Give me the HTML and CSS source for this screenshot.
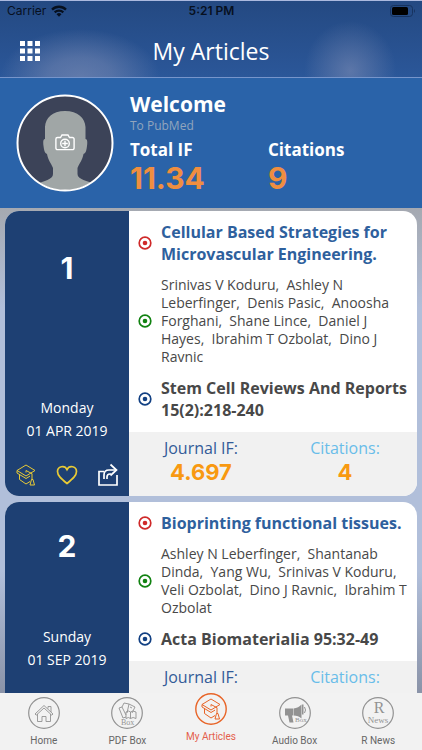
FILE: index.html
```html
<!DOCTYPE html>
<html lang="en">
<head>
<meta charset="utf-8">
<meta name="viewport" content="width=device-width, initial-scale=1">
<title>My Articles</title>
<link rel="stylesheet" href="styles.css">
</head>
<body>
<svg class="defs" aria-hidden="true">
  <symbol id="target" viewBox="0 0 14 14"><circle cx="7" cy="7" r="5.8" fill="none" stroke="currentColor" stroke-width="1.7"/><circle cx="7" cy="7" r="2.3" fill="currentColor"/></symbol>
  <symbol id="cap" viewBox="0 0 20 22"><g fill="none" stroke="currentColor" stroke-linejoin="round"><path d="M10 1 19 6.500 10 12 1 6.500Z"/><path d="M1 6.500V9l9 5.500 4-2.400M3.500 10.800V15.500l6.500 4.500 4-2.500M10 8.500V6.500l6 3.200v6"/><path d="M15.500 15.500h1.500l1.500 5.500h-4.500Z"/></g></symbol>
</svg>
<header class="topbar">
  <div class="status">
    <span class="carrier">Carrier
      <svg width="16" height="12" viewBox="0 0 16 12" aria-hidden="true"><g fill="none" stroke="#07101f" stroke-width="2.300"><path d="M1 4.600a10 10 0 0 1 14 0"/><path d="M3.700 7.400a6.200 6.200 0 0 1 8.600 0"/></g><path d="M8 11.800 5.500 9.200a3.600 3.600 0 0 1 5 0Z" fill="#07101f"/></svg>
    </span>
    <span class="clock">5:21 PM</span>
    <svg class="battery" width="26" height="12" viewBox="0 0 26 12" aria-hidden="true"><rect x=".5" y=".5" width="22" height="11" rx="3" fill="none" stroke="#17335f"/><rect x="2" y="2" width="16" height="8" rx="1.500" fill="#000"/><path d="M24 4q2 2 0 4Z" fill="#17335f"/></svg>
  </div>
  <div class="titlebar">
    <button class="menu" aria-label="Menu"><svg width="20" height="20" viewBox="0 0 20 20" fill="#fff"><path d="M0 0h5v5H0zM7.500 0h5v5h-5zM15 0h5v5h-5zM0 7.500h5v5H0zM7.500 7.500h5v5h-5zM15 7.500h5v5h-5zM0 15h5v5H0zM7.500 15h5v5h-5zM15 15h5v5h-5z"/></svg></button>
    <h1>My Articles</h1>
  </div>
</header>
<section class="profile">
  <button class="avatar" aria-label="Change photo">
    <svg width="98" height="98" viewBox="0 0 98 98"><defs><clipPath id="disc"><circle cx="49" cy="49" r="47"/></clipPath></defs><circle cx="49" cy="49" r="48" fill="#3c4358"/><g clip-path="url(#disc)"><path d="M49 17c13 0 20 7 20.500 16v12c2 0 2 3 1.500 7s-1 7-3.500 8c-1 6-4 9-6 14v6c0 6 10 6 18 11v12H20V91c8-5 17-5 17-11v-6c-2-5-5-8-6-14-2.500-1-3-4-3.500-8s-.5-7 1.500-7V33c.5-9 7-16 20-16Z" fill="#a0a6a6"/></g><circle cx="49" cy="49" r="47.500" fill="none" stroke="#fff" stroke-width="2"/><g fill="none" stroke="#fff" stroke-width="1.400"><path d="M41.500 43.500h3l1.500-2.500h6l1.500 2.500h3a1.600 1.600 0 0 1 1.600 1.600V54a1.600 1.600 0 0 1-1.600 1.600h-15A1.600 1.600 0 0 1 39.900 54v-8.900a1.600 1.600 0 0 1 1.600-1.600Z"/><circle cx="49" cy="49.500" r="4.300"/><path d="M49 46.700v5.600M46.200 49.500h5.600"/></g></svg>
  </button>
  <div class="summary">
    <h2>Welcome</h2>
    <p class="source">To PubMed</p>
    <dl class="totals">
      <div><dt>Total IF</dt><dd>11.34</dd></div>
      <div><dt>Citations</dt><dd>9</dd></div>
    </dl>
  </div>
</section>
<main class="list">
  <article class="card">
    <div class="side">
      <span class="number">1</span>
      <p class="date">Monday<br>01 APR 2019</p>
      <div class="actions">
        <button aria-label="Read article"><svg width="20" height="22"><use href="#cap"/></svg></button>
        <button aria-label="Favourite"><svg width="22" height="20" viewBox="0 0 22 20"><path d="M11 18.500C5 13.500 1.500 10.500 1.500 6.500 1.500 1.500 8.500-.5 11 4.500c2.500-5 9.500-3 9.500 2 0 4-3.500 7-9.500 12Z" fill="none" stroke="currentColor" stroke-width="1.700"/></svg></button>
        <button class="share" aria-label="Share"><svg width="20" height="24" viewBox="0 0 20 24"><g fill="none" stroke="currentColor" stroke-width="1.700"><path d="M6 8.500H1V22h18V12"/><path d="M6 16v-4q0-5 5-5h7"/><path d="m12.500 1.500 6 5.500-6 5.500"/><path d="M9 16v-2q0-3 3-3h1"/></g></svg></button>
      </div>
    </div>
    <div class="content">
      <div class="details">
        <svg class="dot red"><use href="#target"/></svg><h3>Cellular Based Strategies for<br>Microvascular Engineering.</h3>
        <svg class="dot green"><use href="#target"/></svg><p class="authors">Srinivas V Koduru,&nbsp; Ashley N<br>Leberfinger,&nbsp; Denis Pasic,&nbsp; Anoosha<br>Forghani,&nbsp; Shane Lince,&nbsp; Daniel J<br>Hayes,&nbsp; Ibrahim T Ozbolat,&nbsp; Dino J<br>Ravnic</p>
        <svg class="dot blue"><use href="#target"/></svg><p class="journal">Stem Cell Reviews And Reports<br>15(2):218-240</p>
      </div>
      <dl class="metrics">
        <div><dt>Journal IF:</dt><dd>4.697</dd></div>
        <div class="cites"><dt>Citations:</dt><dd>4</dd></div>
      </dl>
    </div>
  </article>
  <article class="card">
    <div class="side">
      <span class="number">2</span>
      <p class="date">Sunday<br>01 SEP 2019</p>
      <div class="actions">
        <button aria-label="Read article"><svg width="20" height="22"><use href="#cap"/></svg></button>
      </div>
    </div>
    <div class="content">
      <div class="details">
        <svg class="dot red"><use href="#target"/></svg><h3>Bioprinting functional tissues.</h3>
        <svg class="dot green"><use href="#target"/></svg><p class="authors">Ashley N Leberfinger,&nbsp; Shantanab<br>Dinda,&nbsp; Yang Wu,&nbsp; Srinivas V Koduru,<br>Veli Ozbolat,&nbsp; Dino J Ravnic,&nbsp; Ibrahim T<br>Ozbolat</p>
        <svg class="dot blue"><use href="#target"/></svg><p class="journal">Acta Biomaterialia 95:32-49</p>
      </div>
      <dl class="metrics">
        <div><dt>Journal IF:</dt></div>
        <div class="cites"><dt>Citations:</dt></div>
      </dl>
    </div>
  </article>
</main>
<nav class="tabs">
  <a href="#home"><svg width="32" height="32" viewBox="0 0 32 32"><g fill="none" stroke="currentColor"><circle cx="16" cy="16" r="15.300" stroke-width="1.200"/><path stroke-width=".9" d="m7 17 9-8.500 9 8.500-1.200 1.200L16 11l-7.800 7.200ZM9.500 17v7.500h4.500v-5h4v5h4.500V17M20 11.500v-2h3V15"/></g></svg>Home</a>
  <a href="#pdf"><svg width="32" height="32" viewBox="0 0 32 32"><g fill="none" stroke="currentColor"><circle cx="16" cy="16" r="15.300" stroke-width="1.200"/><path stroke-width=".9" d="m11 10 2-4 5 1-2 9M18 7l6 3-3 6M11 10l-3 1 4 10 3-1M11 10l4 8M15 15q3-2 4.500 0 2-2 5.500 0v6.500q-3-2-5.500 0-2-2-4.500 0ZM19.500 15v6.500M19 10l2 1"/></g><text x="10" y="28" font-size="8" class="serif">Box</text></svg>PDF Box</a>
  <a class="active" href="#articles" aria-current="page"><svg width="32" height="32" viewBox="0 0 32 32"><circle cx="16" cy="16" r="15.200" fill="none" stroke="currentColor" stroke-width="1.400"/><use href="#cap" x="6" y="5" width="20" height="22"/></svg>My Articles</a>
  <a href="#audio"><svg width="32" height="32" viewBox="0 0 32 32"><circle cx="16" cy="16" r="15.300" fill="none" stroke="currentColor" stroke-width="1.200"/><path d="M6 11.500h8v7h-1l1.500 7h-4L9 18.500H6ZM14.500 11.500q5-.5 8-4v14q-3-3-8-3ZM23 7.500h1.500v10H23Z" fill="currentColor"/><path d="M25.500 10q2 3 0 6" fill="none" stroke="currentColor"/><text x="16" y="25" font-size="7" class="serif">Box</text></svg>Audio Box</a>
  <a href="#news"><svg width="32" height="32" viewBox="0 0 32 32"><circle cx="16" cy="16" r="15.300" fill="none" stroke="currentColor" stroke-width="1.200"/><text x="17" y="16" font-size="16" text-anchor="middle" class="serif">R</text><text x="16" y="26" font-size="9" text-anchor="middle" class="serif">News</text></svg>R News</a>
</nav>
</body>
</html>
```
FILE: styles.css
```css
* { box-sizing: border-box; margin: 0; padding: 0; }

body {
  display: flex;
  flex-direction: column;
  height: 100vh;
  overflow: hidden;
  font-family: "Open Sans", "Noto Sans", sans-serif;
  color: #484848;
  background: #b1bfda;
}

button { border: 0; background: none; color: inherit; font: inherit; line-height: 0; }
svg { display: block; }
.defs { position: absolute; width: 0; height: 0; }
.serif { font-family: "Liberation Serif", serif; fill: currentColor; }

.topbar {
  flex: none;
  border-top: 1px solid #abb9df;
  border-bottom: 1px solid #7795cb;
  background:
    radial-gradient(ellipse 80px 48px at 19% 100%, rgba(125, 140, 180, .65), rgba(125, 140, 180, .5) 40%, transparent),
    radial-gradient(ellipse 46px 50px at 83% 92%, rgba(125, 140, 180, .6), transparent),
    linear-gradient(#244982, #2b5799);
}

.status {
  display: grid;
  grid-template-columns: 1fr auto 1fr;
  align-items: center;
  height: 20px;
  padding: 0 6px 0 7px;
  font: 12px/20px Inter, sans-serif;
  color: #07101f;
}
.carrier { display: flex; align-items: center; gap: 5px; }
.clock { font-weight: 600; }
.battery { justify-self: end; }

.titlebar {
  display: grid;
  grid-template-columns: 1fr auto 1fr;
  align-items: center;
  height: 56px;
  padding: 4px 20px 0;
}
.menu { justify-self: start; }
h1 { font-size: 23px; font-weight: 400; line-height: 32px; color: #fff; }

.profile {
  flex: none;
  display: flex;
  align-items: center;
  gap: 16px;
  padding: 13px 16px 14px;
  background: #2a63a9;
  color: #fff;
}
.avatar { flex: none; }
.summary { flex: 1; }
h2 { font-size: 21px; line-height: 26px; font-weight: 700; }
.source { font-size: 12px; line-height: 17px; color: #92a5bd; }
.totals { display: flex; margin-top: 4px; }
.totals > div { width: 138px; }
.totals dt { font-size: 17px; line-height: 24px; font-weight: 700; }
.totals dd { font: 700 30px/32px Inter, sans-serif; color: #ef8e40; }

.list {
  flex: 1;
  min-height: 0;
  overflow: hidden;
  display: flex;
  flex-direction: column;
  gap: 6px;
  padding: 3px 5px 0;
  background: linear-gradient(#a5a9b1, #b1bfda 100px, #b1bfda 75%, #8a93a8);
}

.card {
  flex: none;
  display: grid;
  grid-template-columns: 124px 1fr;
  overflow: hidden;
  border-radius: 14px;
  background: #fff;
}

.side {
  display: grid;
  grid-template-rows: 1fr 28px 4fr 66px 26px;
  justify-items: center;
  padding: 14px 0 8px;
  background: #1e4073;
  color: #fff;
}
.number { grid-row: 2; font: 700 30px/28px Inter, sans-serif; }
.date { grid-row: 4; font-size: 14px; line-height: 23px; text-align: center; }
.actions {
  grid-row: 5;
  display: flex;
  justify-content: space-between;
  align-items: center;
  width: 100%;
  padding: 0 11px;
  color: #e8ca35;
}
.share { color: #fff; }

.content { display: flex; flex-direction: column; }
.details {
  display: grid;
  grid-template-columns: 14px 1fr;
  align-items: center;
  gap: 11px 9px;
  padding: 10px 0 11px 9px;
}
.dot { width: 14px; height: 14px; }
.red { color: #cf2929; }
.green { color: #118211; }
.blue { color: #124083; }
h3, .journal { font-size: 16px; line-height: 22px; font-weight: 700; white-space: nowrap; }
h3 { color: #2e609d; }
.authors { font-size: 14px; line-height: 18px; white-space: nowrap; }

.metrics {
  display: grid;
  grid-template-columns: 1fr 1fr;
  height: 64px;
  padding-top: 4px;
  background: #f1f1f1;
  text-align: center;
}
.metrics dt { font-size: 16px; line-height: 24px; color: #335b98; }
.metrics .cites dt { color: #69bde9; }
.metrics dd { font: 700 22px/24px Inter, sans-serif; color: #f89911; }

.tabs {
  flex: none;
  display: grid;
  grid-template-columns: repeat(5, 1fr);
  height: 57px;
  padding: 0 2px;
  background: #f2f2f2;
}
.tabs a {
  display: flex;
  flex-direction: column;
  align-items: center;
  gap: 5px;
  padding-top: 4px;
  font: 10px/14px Roboto, sans-serif;
  color: #666;
  text-decoration: none;
}
.tabs svg { color: #929292; }
.tabs .active { padding-top: 0; color: #e45f4c; }
.tabs .active svg { color: #e86427; }
```
